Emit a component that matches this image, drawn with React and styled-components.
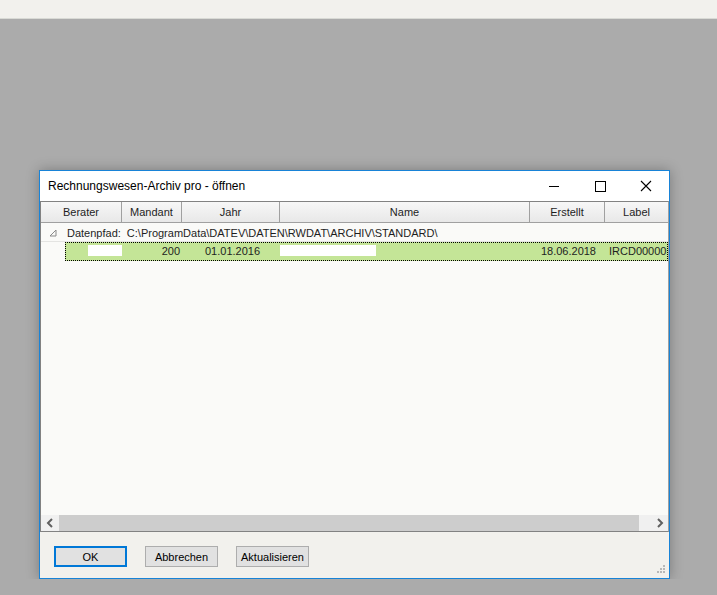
import React from 'react'
import styled, { createGlobalStyle } from 'styled-components'

const GlobalStyle = createGlobalStyle`
  html, body {
    margin: 0;
    padding: 0;
    background: #ababab;
    font-family: "Liberation Sans", Arial, sans-serif;
    font-size: 11px;
    color: #1e1e1e;
  }
`

const TopBar = styled.div`
  height: 18px;
  background: #f2f1ed;
  border-bottom: 1px solid #d9dad5;
`

const Dialog = styled.div`
  margin: 151px 0 0 39px;
  width: 631px;
  height: 409px;
  box-sizing: border-box;
  border: 1px solid #1883d7;
  background: #f2f1ed;
  display: flex;
  flex-direction: column;
  box-shadow: 0 0 12px rgba(0, 0, 0, 0.28);
  position: relative;
`

const TitleBar = styled.div`
  height: 30px;
  background: #fff;
  display: flex;
  align-items: center;
  flex-shrink: 0;
`

const Title = styled.div`
  flex: 1;
  padding-left: 8px;
  font-size: 12px;
  color: #000;
`

const WinButton = styled.div`
  width: 46px;
  height: 30px;
  display: flex;
  align-items: center;
  justify-content: center;
`

const ListView = styled.div`
  flex: 1;
  border: 1px solid #828282;
  border-right-color: #a0a0a0;
  background: #fafaf8;
  display: flex;
  flex-direction: column;
  overflow: hidden;
`

const Header = styled.div`
  display: grid;
  grid-template-columns: 81px 60px 98px 250px 75px 1fr;
  height: 20px;
  background: linear-gradient(#f7f7f7, #e8e8e8);
  border-bottom: 1px solid #a0a0a0;
  flex-shrink: 0;
`

const HeaderCell = styled.div`
  display: flex;
  align-items: center;
  justify-content: center;
  border-right: 1px solid #a0a0a0;
  color: #1e1e1e;
  &:last-child {
    border-right: none;
  }
`

const Body = styled.div`
  flex: 1;
  overflow: hidden;
`

const GroupRow = styled.div`
  height: 19px;
  display: flex;
  align-items: center;
  border-bottom: 1px solid #e4e4e2;
  white-space: nowrap;
  box-sizing: border-box;
  padding-top: 1px;
`

const Expander = styled.span`
  width: 26px;
  padding-left: 8px;
  box-sizing: border-box;
  display: flex;
  align-items: center;
`

const GroupLabel = styled.span`
  margin-right: 6px;
`

const DataRow = styled.div`
  margin-left: 24px;
  height: 19px;
  box-sizing: border-box;
  border: 1px dotted #000;
  padding-bottom: 2px;
  background: #c4e597;
  display: grid;
  grid-template-columns: 56px 60px 98px 250px 75px 90px;
  align-items: center;
  overflow: hidden;
  white-space: nowrap;
`

const Cell = styled.div`
  display: flex;
  align-items: center;
  justify-content: ${(p) => (p.$align === 'right' ? 'flex-end' : 'flex-start')};
  padding: ${(p) => p.$pad || '0'};
  height: 100%;
  box-sizing: border-box;
`

const Redacted = styled.div`
  background: #fff;
  width: ${(p) => p.$w}px;
  height: 11px;
`

const ScrollBar = styled.div`
  height: 16px;
  display: grid;
  grid-template-columns: 18px 580px 1fr 16px;
  flex-shrink: 0;
  background: #f0f0f0;
`

const ScrollArrow = styled.div`
  display: flex;
  align-items: center;
  justify-content: center;
  background: #f0f0f0;
`

const Thumb = styled.div`
  background: #cdcdcd;
`

const Footer = styled.div`
  height: 46px;
  flex-shrink: 0;
  display: flex;
  gap: 18px;
  padding: 14px 0 0 14px;
  box-sizing: border-box;
  background: #f2f1ed;
`

const Button = styled.button`
  width: 73px;
  height: 21px;
  box-sizing: border-box;
  font-family: inherit;
  font-size: 11px;
  color: #000;
  background: #e1e1e1;
  border: ${(p) => (p.$default ? '2px solid #0078d7' : '1px solid #adadad')};
  padding: 0;
`

const Grip = styled.svg`
  position: absolute;
  right: 3px;
  bottom: 2px;
`

const Arrow = ({ dir }) => (
  <svg width="8" height="10" viewBox="0 0 8 10">
    <path
      d={dir === 'left' ? 'M6 1 L2 5 L6 9' : 'M2 1 L6 5 L2 9'}
      fill="none"
      stroke="#606060"
      strokeWidth="2"
    />
  </svg>
)

const columns = ['Berater', 'Mandant', 'Jahr', 'Name', 'Erstellt', 'Label']

const App = () => (
  <>
    <GlobalStyle />
    <TopBar />
    <Dialog>
      <TitleBar>
        <Title>Rechnungswesen-Archiv pro - öffnen</Title>
        <WinButton>
          <svg width="12" height="12" viewBox="0 0 12 12">
            <path d="M1 6.5 H11" stroke="#000" strokeWidth="1" />
          </svg>
        </WinButton>
        <WinButton>
          <svg width="12" height="12" viewBox="0 0 12 12">
            <rect x="1.5" y="1.5" width="10" height="10" fill="none" stroke="#000" strokeWidth="1" />
          </svg>
        </WinButton>
        <WinButton>
          <svg width="12" height="12" viewBox="0 0 12 12">
            <path d="M1 1 L11 11 M11 1 L1 11" stroke="#000" strokeWidth="1.1" />
          </svg>
        </WinButton>
      </TitleBar>
      <ListView>
        <Header>
          {columns.map((c) => (
            <HeaderCell key={c}>{c}</HeaderCell>
          ))}
        </Header>
        <Body>
          <GroupRow>
            <Expander>
              <svg width="8" height="8" viewBox="0 0 8 8">
                <path d="M7 1 L7 7 L1 7 Z" fill="none" stroke="#8a8a8a" strokeWidth="1" />
              </svg>
            </Expander>
            <GroupLabel>Datenpfad:</GroupLabel>
            C:\ProgramData\DATEV\DATEN\RWDAT\ARCHIV\STANDARD\
          </GroupRow>
          <DataRow>
            <Cell $align="right">
              <Redacted $w={34} />
            </Cell>
            <Cell $align="right" $pad="0 2px 0 0">200</Cell>
            <Cell $pad="0 0 0 23px">01.01.2016</Cell>
            <Cell>
              <Redacted $w={96} />
            </Cell>
            <Cell $align="right" $pad="0 9px 0 0">18.06.2018</Cell>
            <Cell $pad="0 0 0 4px">IRCD000005</Cell>
          </DataRow>
        </Body>
        <ScrollBar>
          <ScrollArrow>
            <Arrow dir="left" />
          </ScrollArrow>
          <Thumb />
          <div />
          <ScrollArrow>
            <Arrow dir="right" />
          </ScrollArrow>
        </ScrollBar>
      </ListView>
      <Footer>
        <Button $default>OK</Button>
        <Button>Abbrechen</Button>
        <Button>Aktualisieren</Button>
      </Footer>
      <Grip width="12" height="12" viewBox="0 0 12 12">
        <g fill="#b8b8b8">
          <rect x="9" y="1" width="2" height="2" />
          <rect x="6" y="4" width="2" height="2" />
          <rect x="9" y="4" width="2" height="2" />
          <rect x="3" y="7" width="2" height="2" />
          <rect x="6" y="7" width="2" height="2" />
          <rect x="9" y="7" width="2" height="2" />
        </g>
      </Grip>
    </Dialog>
  </>
)

export default App
